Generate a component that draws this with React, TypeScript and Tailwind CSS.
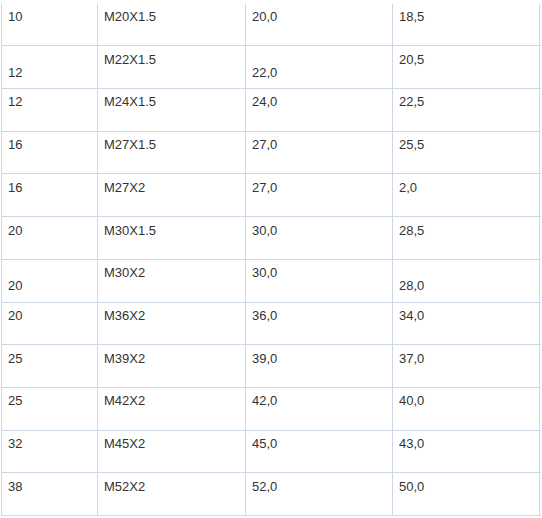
const rows: string[][] = [
  ['10', 'M20X1.5', '20,0', '18,5'],
  ['\n12', 'M22X1.5', '\n22,0', '20,5'],
  ['12', 'M24X1.5', '24,0', '22,5'],
  ['16', 'M27X1.5', '27,0', '25,5'],
  ['16', 'M27X2', '27,0', '2,0'],
  ['20', 'M30X1.5', '30,0', '28,5'],
  ['\n20', 'M30X2', '30,0', '\n28,0'],
  ['20', 'M36X2', '36,0', '34,0'],
  ['25', 'M39X2', '39,0', '37,0'],
  ['25', 'M42X2', '42,0', '40,0'],
  ['32', 'M45X2', '45,0', '43,0'],
  ['38', 'M52X2', '52,0', '50,0'],
];

export default function App() {
  return (
    <div className="w-[542px] h-[518px] overflow-hidden bg-white pt-[3.5px] pl-px font-['Liberation_Sans',Arial,sans-serif] text-[13px] leading-[13px] text-[#333]">
      <div className="w-[540px]">
        {rows.map((row, i) => (
          <div
            key={i}
            className="grid grid-cols-[96px_148px_147px_148px] h-[42.73px] border-b border-[#ccd8e6]"
          >
            {row.map((cell, j) => (
              <div
                key={j}
                className={`border-l border-[#ccd8e6] pl-[6px] pt-[6.5px] whitespace-pre ${j === 3 ? 'border-r' : ''}`}
              >
                {cell}
              </div>
            ))}
          </div>
        ))}
      </div>
    </div>
  );
}
